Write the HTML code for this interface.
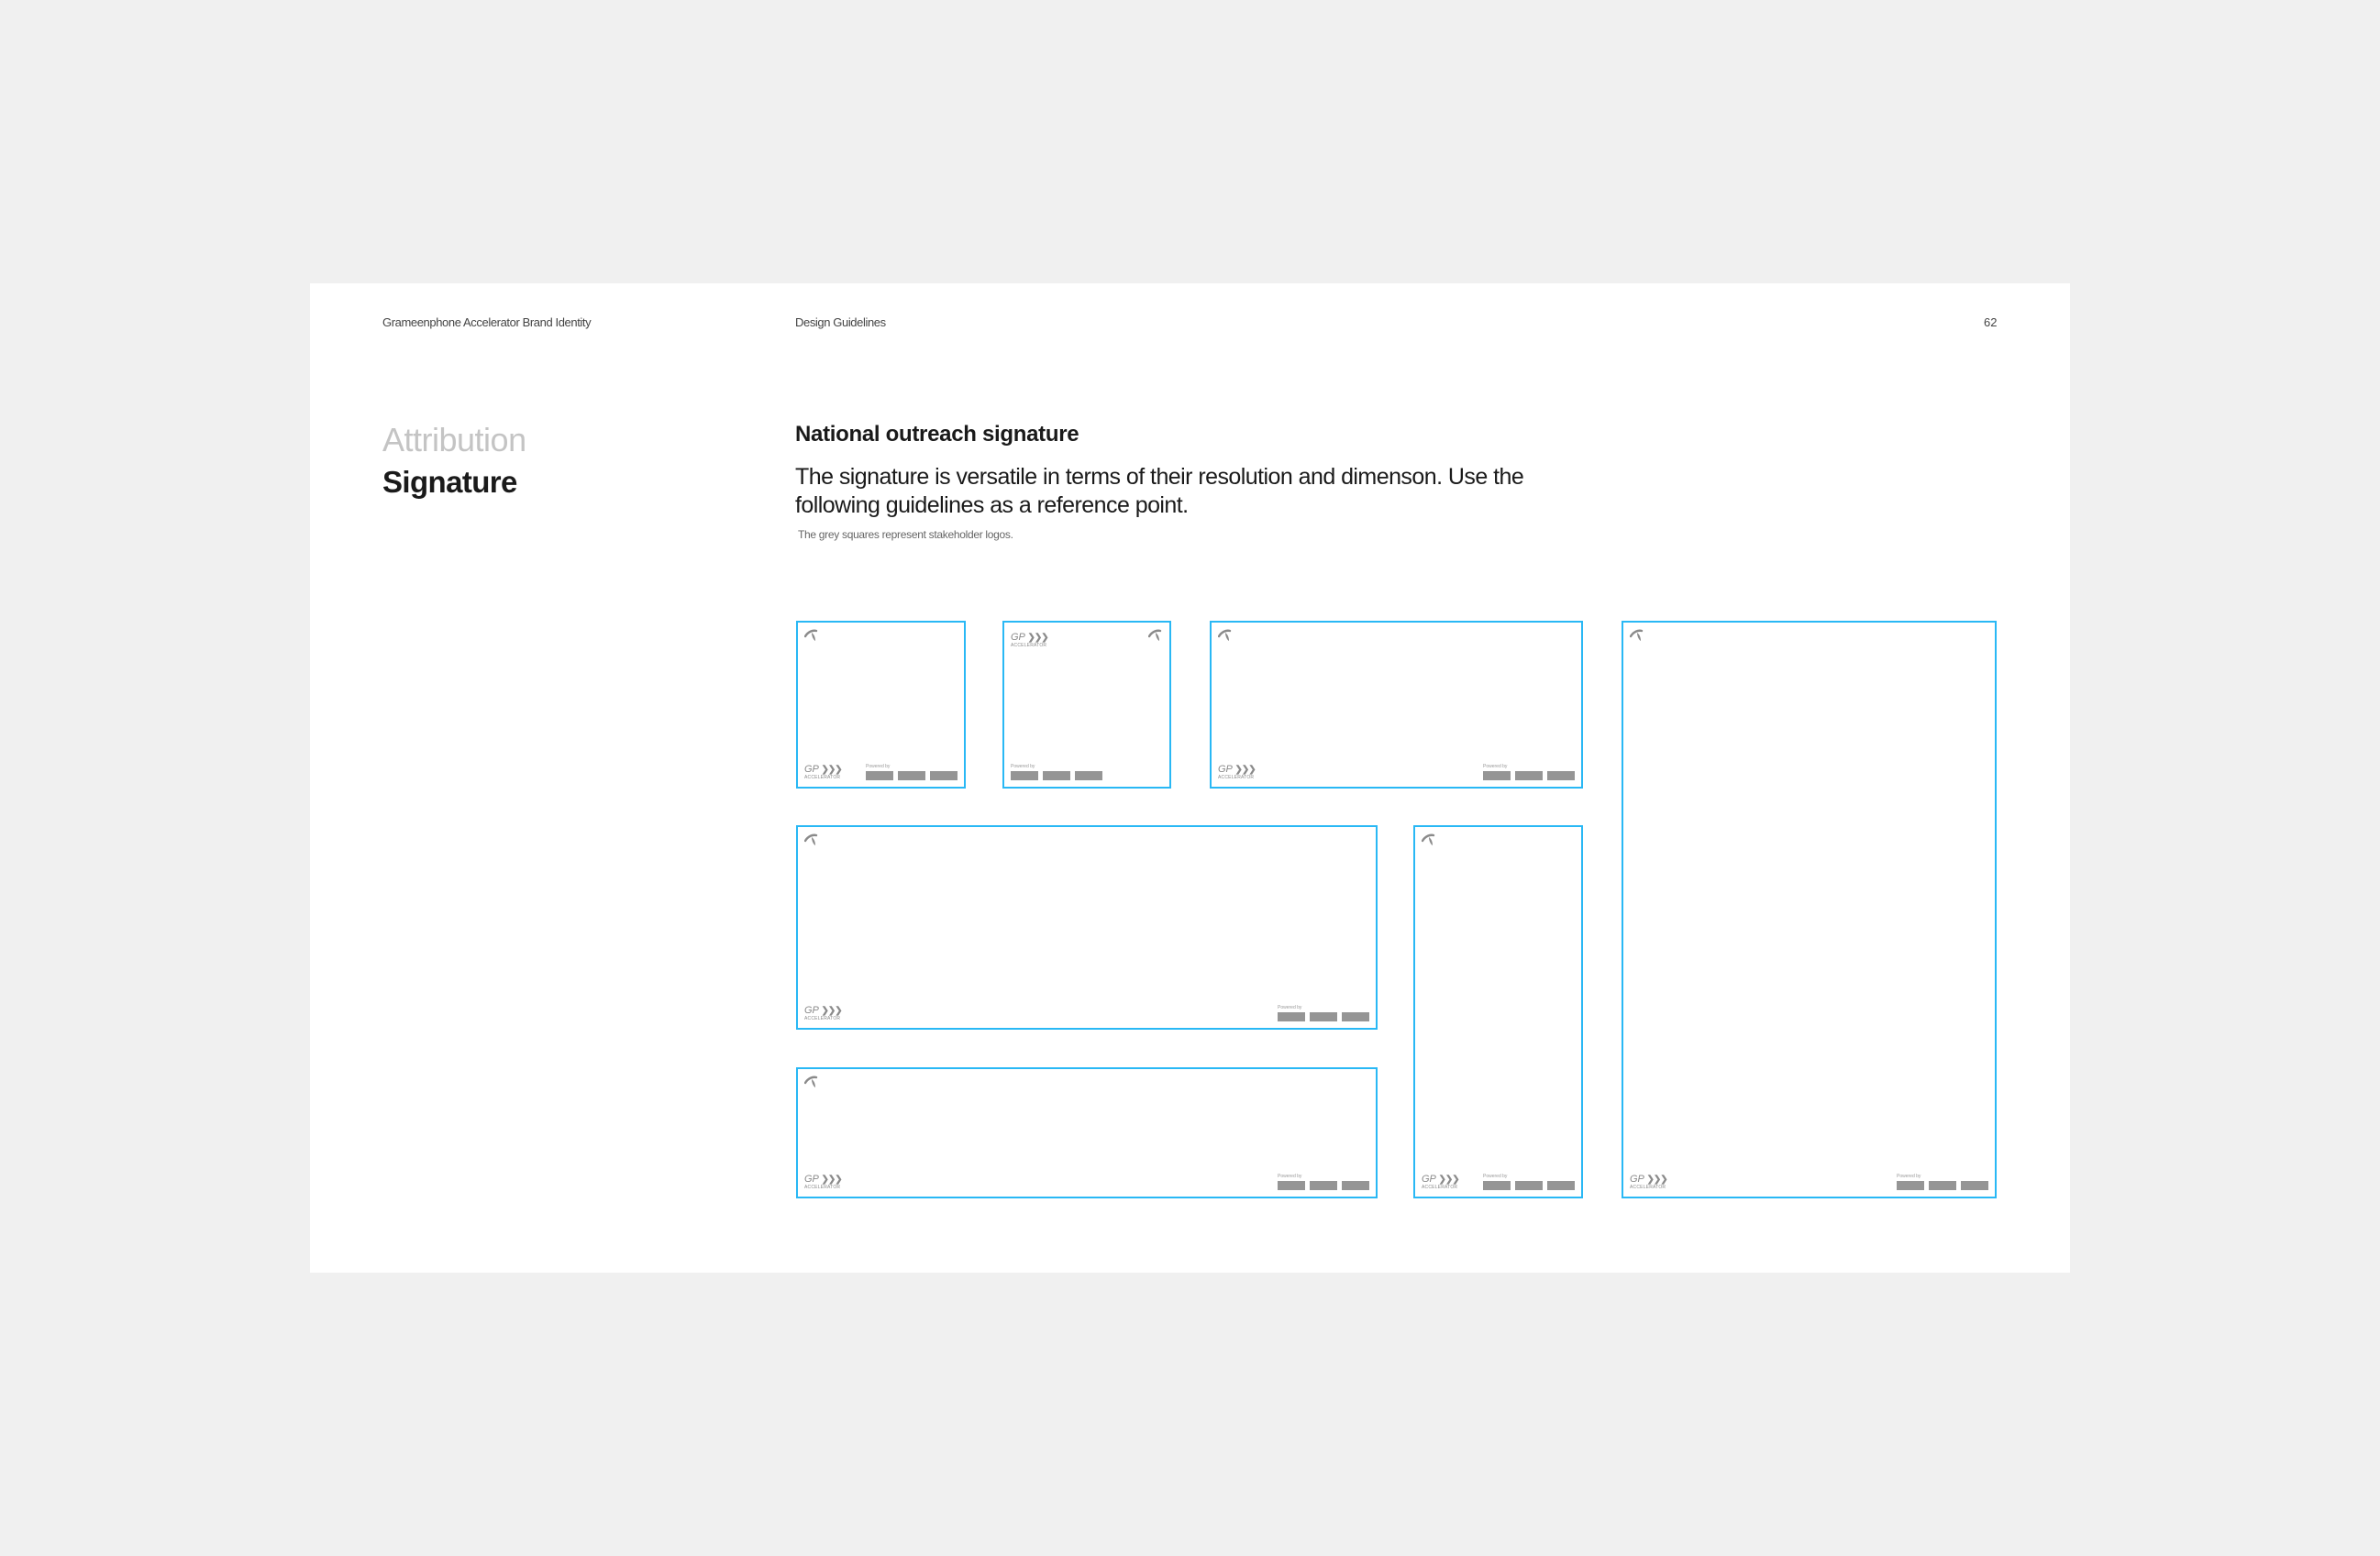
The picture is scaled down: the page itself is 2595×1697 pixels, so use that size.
<!DOCTYPE html>
<html><head><meta charset="utf-8"><style>
html,body{margin:0;padding:0}
body{width:2595px;height:1697px;background:#f0f0f0;position:relative;overflow:hidden;font-family:"Liberation Sans",sans-serif}
.card{position:absolute;left:338px;top:309px;width:1919px;height:1079px;background:#fff}
.t{position:absolute;white-space:nowrap;color:#333}
.b{position:absolute;border:2px solid #29b8f5;box-sizing:border-box;background:#fff}
.tel{position:absolute;left:7px;top:7px;width:16px;height:14px}
.gp{position:absolute;left:7px;bottom:7px;color:#8a8a8a;line-height:1}
.gp .a{font-size:11px;font-style:italic}
.gp .a b{font-style:normal;font-size:10px;letter-spacing:-1px}
.gp .s{font-size:5px;display:block;letter-spacing:.2px}
.pw{position:absolute;right:7px;bottom:7px;width:100px;height:18px}
.pw span{position:absolute;left:0;top:0;font-size:5px;color:#999}
.pw i{position:absolute;bottom:0;width:30px;height:10px;background:#959595}
</style></head><body>
<div class="card"></div>
<div class="t" style="left:417px;top:344px;font-size:13px;letter-spacing:-0.4px;color:#444">Grameenphone Accelerator Brand Identity</div>
<div class="t" style="left:867px;top:344px;font-size:13px;letter-spacing:-0.4px;color:#444">Design Guidelines</div>
<div class="t" style="left:2163px;top:344px;font-size:13px;color:#444">62</div>
<div class="t" style="left:417px;top:459px;font-size:36px;letter-spacing:-0.5px;color:#c4c4c4">Attribution</div>
<div class="t" style="left:417px;top:507px;font-size:33px;font-weight:bold;letter-spacing:-0.6px;color:#1a1a1a">Signature</div>
<div class="t" style="left:867px;top:460px;font-size:24px;font-weight:bold;letter-spacing:-0.3px;color:#1a1a1a">National outreach signature</div>
<div class="t" style="left:867px;top:505px;font-size:25px;letter-spacing:-0.55px;line-height:31px;color:#1a1a1a">The signature is versatile in terms of their resolution and dimenson. Use the<br>following guidelines as a reference point.</div>
<div class="t" style="left:870px;top:576px;font-size:12px;letter-spacing:-0.3px;color:#666">The grey squares represent stakeholder logos.</div>

<div class="b" style="left:868px;top:677px;width:185px;height:183px">
 <svg class="tel" viewBox="0 0 16 14"><path d="M1 8 C4 3 9 1 13 2" stroke="#8a8a8a" stroke-width="2.4" fill="none" stroke-linecap="round"/><path d="M8 4 C11 6 12 10 12 13 C10 12 8 8 8 4Z" fill="#8a8a8a"/></svg>
 <div class="gp"><span class="a">GP <b>❯❯❯</b></span><span class="s">ACCELERATOR</span></div>
 <div class="pw"><span>Powered by</span><i style="left:0"></i><i style="left:35px"></i><i style="left:70px"></i></div>
</div>
<div class="b" style="left:1093px;top:677px;width:184px;height:183px">
 <svg class="tel" style="left:auto;right:7px" viewBox="0 0 16 14"><path d="M1 8 C4 3 9 1 13 2" stroke="#8a8a8a" stroke-width="2.4" fill="none" stroke-linecap="round"/><path d="M8 4 C11 6 12 10 12 13 C10 12 8 8 8 4Z" fill="#8a8a8a"/></svg>
 <div class="gp" style="top:7px;bottom:auto"><span class="a">GP <b>❯❯❯</b></span><span class="s">ACCELERATOR</span></div>
 <div class="pw" style="left:7px;right:auto"><span>Powered by</span><i style="left:0"></i><i style="left:35px"></i><i style="left:70px"></i></div>
</div>
<div class="b" style="left:1319px;top:677px;width:407px;height:183px">
 <svg class="tel" viewBox="0 0 16 14"><path d="M1 8 C4 3 9 1 13 2" stroke="#8a8a8a" stroke-width="2.4" fill="none" stroke-linecap="round"/><path d="M8 4 C11 6 12 10 12 13 C10 12 8 8 8 4Z" fill="#8a8a8a"/></svg>
 <div class="gp"><span class="a">GP <b>❯❯❯</b></span><span class="s">ACCELERATOR</span></div>
 <div class="pw"><span>Powered by</span><i style="left:0"></i><i style="left:35px"></i><i style="left:70px"></i></div>
</div>
<div class="b" style="left:1768px;top:677px;width:409px;height:630px">
 <svg class="tel" viewBox="0 0 16 14"><path d="M1 8 C4 3 9 1 13 2" stroke="#8a8a8a" stroke-width="2.4" fill="none" stroke-linecap="round"/><path d="M8 4 C11 6 12 10 12 13 C10 12 8 8 8 4Z" fill="#8a8a8a"/></svg>
 <div class="gp"><span class="a">GP <b>❯❯❯</b></span><span class="s">ACCELERATOR</span></div>
 <div class="pw"><span>Powered by</span><i style="left:0"></i><i style="left:35px"></i><i style="left:70px"></i></div>
</div>
<div class="b" style="left:868px;top:900px;width:634px;height:223px">
 <svg class="tel" viewBox="0 0 16 14"><path d="M1 8 C4 3 9 1 13 2" stroke="#8a8a8a" stroke-width="2.4" fill="none" stroke-linecap="round"/><path d="M8 4 C11 6 12 10 12 13 C10 12 8 8 8 4Z" fill="#8a8a8a"/></svg>
 <div class="gp"><span class="a">GP <b>❯❯❯</b></span><span class="s">ACCELERATOR</span></div>
 <div class="pw"><span>Powered by</span><i style="left:0"></i><i style="left:35px"></i><i style="left:70px"></i></div>
</div>
<div class="b" style="left:1541px;top:900px;width:185px;height:407px">
 <svg class="tel" viewBox="0 0 16 14"><path d="M1 8 C4 3 9 1 13 2" stroke="#8a8a8a" stroke-width="2.4" fill="none" stroke-linecap="round"/><path d="M8 4 C11 6 12 10 12 13 C10 12 8 8 8 4Z" fill="#8a8a8a"/></svg>
 <div class="gp"><span class="a">GP <b>❯❯❯</b></span><span class="s">ACCELERATOR</span></div>
 <div class="pw"><span>Powered by</span><i style="left:0"></i><i style="left:35px"></i><i style="left:70px"></i></div>
</div>
<div class="b" style="left:868px;top:1164px;width:634px;height:143px">
 <svg class="tel" viewBox="0 0 16 14"><path d="M1 8 C4 3 9 1 13 2" stroke="#8a8a8a" stroke-width="2.4" fill="none" stroke-linecap="round"/><path d="M8 4 C11 6 12 10 12 13 C10 12 8 8 8 4Z" fill="#8a8a8a"/></svg>
 <div class="gp"><span class="a">GP <b>❯❯❯</b></span><span class="s">ACCELERATOR</span></div>
 <div class="pw"><span>Powered by</span><i style="left:0"></i><i style="left:35px"></i><i style="left:70px"></i></div>
</div>
</body></html>
